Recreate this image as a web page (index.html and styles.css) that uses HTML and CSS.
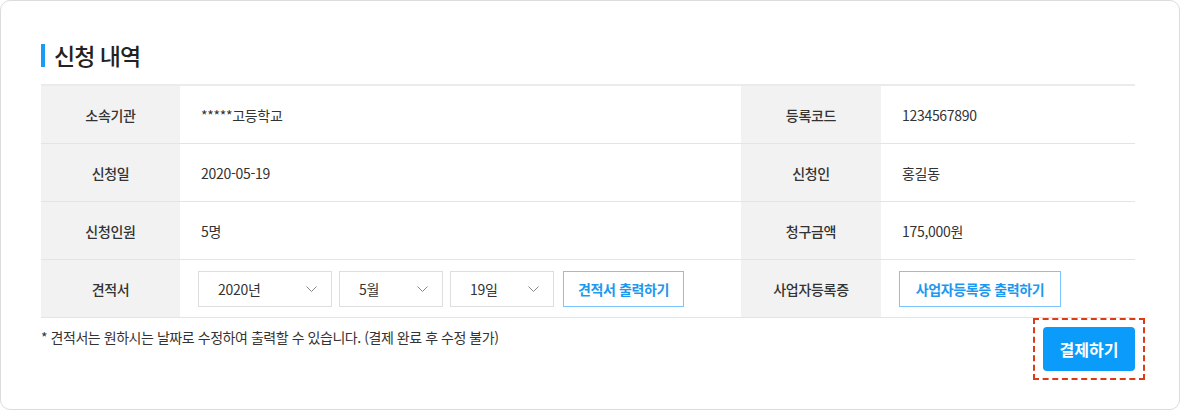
FILE: index.html
```html
<!DOCTYPE html>
<html lang="ko">
<head>
    <meta charset="UTF-8">
    <meta name="viewport" content="width=device-width, initial-scale=1.0">
    <title>신청 내역</title>
    <link rel="stylesheet" href="styles.css">
</head>
<body>
    <div class="card">
        <h2 class="section-title">신청 내역</h2>
        <table class="info-table">
            <colgroup>
                <col class="col-label">
                <col class="col-value">
                <col class="col-label2">
                <col>
            </colgroup>
            <tbody>
                <tr>
                    <th>소속기관</th>
                    <td>*****고등학교</td>
                    <th>등록코드</th>
                    <td>1234567890</td>
                </tr>
                <tr>
                    <th>신청일</th>
                    <td>2020-05-19</td>
                    <th>신청인</th>
                    <td>홍길동</td>
                </tr>
                <tr>
                    <th>신청인원</th>
                    <td>5명</td>
                    <th>청구금액</th>
                    <td>175,000원</td>
                </tr>
                <tr>
                    <th>견적서</th>
                    <td class="controls">
                        <div class="control-row">
                            <div class="select select-year">
                                <span>2020년</span>
                                <svg width="11" height="6" viewBox="0 0 11 6"><path d="M0.5 0.5 L5.5 5.5 L10.5 0.5" fill="none" stroke="#888" stroke-width="1"/></svg>
                            </div>
                            <div class="select">
                                <span>5월</span>
                                <svg width="11" height="6" viewBox="0 0 11 6"><path d="M0.5 0.5 L5.5 5.5 L10.5 0.5" fill="none" stroke="#888" stroke-width="1"/></svg>
                            </div>
                            <div class="select">
                                <span>19일</span>
                                <svg width="11" height="6" viewBox="0 0 11 6"><path d="M0.5 0.5 L5.5 5.5 L10.5 0.5" fill="none" stroke="#888" stroke-width="1"/></svg>
                            </div>
                            <button class="btn-line">견적서 출력하기</button>
                        </div>
                    </td>
                    <th>사업자등록증</th>
                    <td class="controls">
                        <button class="btn-line btn-wide">사업자등록증 출력하기</button>
                    </td>
                </tr>
            </tbody>
        </table>
        <div class="footer">
            <p class="note">* 견적서는 원하시는 날짜로 수정하여 출력할 수 있습니다. (결제 완료 후 수정 불가)</p>
            <div class="pay-focus">
                <button class="btn-pay">결제하기</button>
            </div>
        </div>
    </div>
</body>
</html>
```

FILE: styles.css
```css
body {
    margin: 0;
    font-family: "Noto Sans CJK KR", "Noto Sans", sans-serif;
    color: #333;
    background-color: #fff;
}
.card {
    box-sizing: border-box;
    width: 1180px;
    height: 410px;
    border: 1px solid #dcdcdc;
    border-radius: 10px;
    padding: 0 44px 0 40px;
}
.section-title {
    margin: 0 0 12px;
    padding-top: 37px;
    height: 34px;
    display: flex;
    align-items: center;
    gap: 9px;
    font-size: 23px;
    font-weight: 500;
    letter-spacing: -1px;
    color: #222;
    line-height: 34px;
}
.section-title::before {
    content: "";
    display: block;
    width: 4px;
    height: 23px;
    background-color: #1a9bf5;
}
.info-table {
    width: 100%;
    border-collapse: collapse;
    border-top: 2px solid #ebebeb;
    table-layout: fixed;
}
.col-label {
    width: 139px;
}
.col-value {
    width: 561px;
}
.col-label2 {
    width: 140px;
}
.info-table th,
.info-table td {
    height: 57px;
    padding: 0;
    border-bottom: 1px solid #e4e4e4;
    font-size: 14px;
    letter-spacing: -0.3px;
}
.info-table th {
    background-color: #f2f2f2;
    font-weight: 500;
    color: #333;
    text-align: center;
}
.info-table td {
    padding-left: 21px;
    font-weight: 400;
    color: #333;
}
.info-table td.controls {
    padding-left: 18px;
}
.control-row {
    display: flex;
    gap: 7px;
    align-items: center;
}
.select {
    box-sizing: border-box;
    width: 104px;
    height: 36px;
    border: 1px solid #dedede;
    display: flex;
    align-items: center;
    justify-content: space-between;
    padding: 0 14px 0 19px;
    font-size: 14px;
    color: #333;
}
.select-year {
    width: 134px;
}
.btn-line {
    box-sizing: border-box;
    height: 36px;
    width: 121px;
    margin-left: 2px;
    border: 1px solid #7cc4fb;
    background-color: #fff;
    color: #1c98ee;
    font-family: inherit;
    font-size: 14px;
    font-weight: 700;
    letter-spacing: -0.4px;
    padding: 0;
}
.btn-wide {
    width: 162px;
    margin-left: 0;
}
.footer {
    display: flex;
    justify-content: space-between;
    align-items: flex-start;
}
.note {
    margin: 9px 0 0;
    font-size: 14px;
    line-height: 20px;
    letter-spacing: -0.45px;
    color: #333;
}
.pay-focus {
    margin-right: -10px;
    padding: 7px 8px;
    border: 2px dashed #dc3b16;
}
.btn-pay {
    display: block;
    width: 92px;
    height: 44px;
    border: none;
    border-radius: 4px;
    background-color: #0b9bfa;
    color: #fff;
    font-family: inherit;
    font-size: 16px;
    font-weight: 700;
    padding: 0;
}
```
